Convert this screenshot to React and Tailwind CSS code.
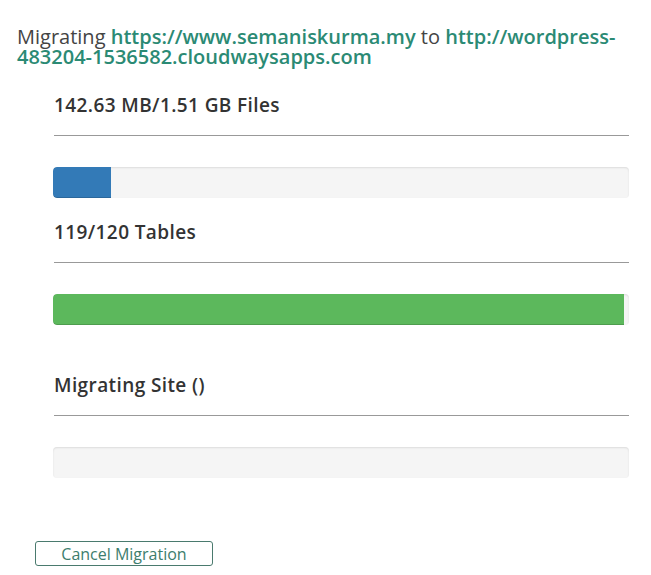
export default function App() {
  const sections = [
    { label: "142.63 MB/1.51 GB Files", pct: 10, color: "bg-[#337ab7]", gap: "" },
    { label: "119/120 Tables", pct: 99.1, color: "bg-[#5cb85c]", gap: "mt-[22px]" },
    { label: "Migrating Site ()", pct: 0, color: "bg-[#337ab7]", gap: "mt-[48px]" },
  ];

  return (
    <div className="w-[651px] h-[575px] bg-white font-['Open_Sans',sans-serif] overflow-hidden">
      <p className="pl-[17px] pt-[27px] text-[20px] leading-[20px] text-[#444]">
        Migrating{" "}
        <a className="font-semibold text-[#2b8a74]">https://www.semaniskurma.my</a>{" "}
        to{" "}
        <a className="font-semibold text-[#2b8a74]">http://wordpress-483204-1536582.cloudwaysapps.com</a>
      </p>

      <div className="ml-[53px] w-[576px] mt-[26px]">
        {sections.map((s, i) => (
          <div key={i} className={s.gap}>
            <h3 className="pl-px text-[19px] leading-[24px] tracking-[0.4px] font-semibold text-[#333]">{s.label}</h3>
            <div className="mt-[18px] h-px bg-[#999] ml-px" />
            <div className="mt-[31px] h-[31px] rounded bg-[#f5f5f5] shadow-[inset_0_1px_2px_rgba(0,0,0,0.1)] overflow-hidden">
              <div
                className={`h-full ${s.color} shadow-[inset_0_-1px_0_rgba(0,0,0,0.15)] rounded-l`}
                style={{ width: `${s.pct}%` }}
              />
            </div>
          </div>
        ))}
      </div>

      <button className="ml-[35px] mt-[63px] w-[178px] h-[25px] border border-[#4a7a6e] rounded-[3px] text-[16px] leading-[22px] text-[#3d7d6d] bg-white">
        Cancel Migration
      </button>
    </div>
  );
}
